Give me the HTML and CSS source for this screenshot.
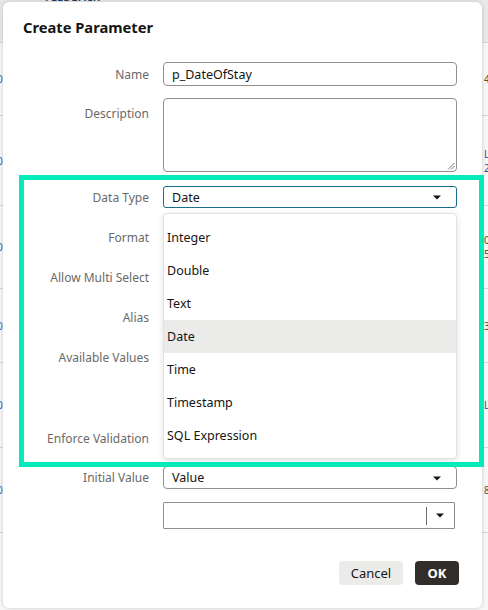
FILE: index.html
```html
<!DOCTYPE html>
<html>
<head>
<meta charset="utf-8">
<link rel="stylesheet" href="styles.css">
</head>
<body>
<div class="backdrop">
  <div class="bg-head"><span class="bg-head-text">FEEDBACK</span></div>
  <div class="bg-row h73"><span class="bg-l">0</span><span class="bg-r"><span>4</span></span></div>
  <div class="bg-row h90"><span class="bg-l">0</span><span class="bg-r blue"><span>L</span><span>2</span></span></div>
  <div class="bg-row h83"><span class="bg-l">0</span><span class="bg-r"><span>0</span><span>5</span></span></div>
  <div class="bg-row h74"><span class="bg-l">0</span><span class="bg-r"><span>3</span></span></div>
  <div class="bg-row h85"><span class="bg-l">0</span><span class="bg-r blue"><span>L</span></span></div>
  <div class="bg-row h85"><span class="bg-l">0</span><span class="bg-r"><span>8</span></span></div>
  <div class="bg-row h80"></div>
</div>

<div class="dialog">
  <h1 class="title">Create Parameter</h1>
  <div class="form">
    <div class="row r-name">
      <span class="lbl">Name</span>
      <div class="field">p_DateOfStay</div>
    </div>
    <div class="row r-desc">
      <span class="lbl lbl-top">Description</span>
      <div class="field area">
        <svg class="grip" width="8" height="8" viewBox="0 0 8 8"><path d="M1 7.5L7.5 1M4 7.5L7.5 4" stroke="#7a7a7a" stroke-width="1" fill="none"/></svg>
      </div>
    </div>
    <div class="row r-std">
      <span class="lbl">Data Type</span>
      <div class="field select focus">Date
        <svg class="caret" width="8" height="5" viewBox="0 0 8 5"><path d="M0 0.5h8L4 4.5z" fill="#161513"/></svg>
      </div>
    </div>
    <div class="row r-gap"><span class="lbl">Format</span><div></div></div>
    <div class="row r-gap"><span class="lbl">Allow Multi Select</span><div></div></div>
    <div class="row r-gap"><span class="lbl">Alias</span><div></div></div>
    <div class="row r-gap r-avail"><span class="lbl lbl-top2">Available Values</span><div></div></div>
    <div class="row r-gap"><span class="lbl">Enforce Validation</span><div></div></div>
    <div class="row r-init">
      <span class="lbl">Initial Value</span>
      <div class="field select">Value
        <svg class="caret" width="8" height="5" viewBox="0 0 8 5"><path d="M0 0.5h8L4 4.5z" fill="#161513"/></svg>
      </div>
    </div>
    <div class="row r-combo">
      <span></span>
      <div class="combo">
        <div class="combo-input"></div>
        <div class="combo-btn">
          <svg width="8" height="5" viewBox="0 0 8 5"><path d="M0 0.5h8L4 4.5z" fill="#161513"/></svg>
        </div>
      </div>
    </div>
  </div>
  <div class="footer">
    <button class="btn cancel">Cancel</button>
    <button class="btn ok">OK</button>
  </div>

  <ul class="listbox">
    <li class="opt">Integer</li>
    <li class="opt">Double</li>
    <li class="opt">Text</li>
    <li class="opt hover">Date</li>
    <li class="opt">Time</li>
    <li class="opt">Timestamp</li>
    <li class="opt">SQL Expression</li>
  </ul>
</div>

<div class="highlight"></div>
</body>
</html>
```
FILE: styles.css
```css
* { box-sizing: border-box; }
html, body { margin: 0; padding: 0; }
body {
  width: 488px;
  height: 610px;
  overflow: hidden;
  position: relative;
  font-family: "Noto Sans", "Open Sans", sans-serif;
  background: #f4f4f4;
}

/* background app */
.backdrop { display: flex; flex-direction: column; width: 488px; }
.bg-head {
  height: 43px;
  background: #e9e9e9;
  border-bottom: 1px solid #d8d8d8;
  overflow: hidden;
}
.bg-head-text {
  display: block;
  margin: -9px 0 0 45px;
  font-size: 11px;
  line-height: 12px;
  color: #1f3a5a;
  font-weight: 600;
}
.bg-row {
  display: flex;
  justify-content: space-between;
  align-items: center;
  border-bottom: 1px solid #d6d6d6;
  background: #f7f7f7;
  font-size: 10px;
  line-height: 12px;
  overflow: hidden;
}
.h73 { height: 73px; }
.h90 { height: 90px; }
.h83 { height: 83px; }
.h74 { height: 74px; }
.h85 { height: 85px; }
.h80 { height: 80px; }
.bg-l { margin-left: -3px; color: #1a6ac8; }
.bg-r {
  margin-right: -2px;
  width: 6px;
  color: #6b4a1e;
  display: flex;
  flex-direction: column;
  gap: 2px;
}
.bg-r.blue { color: #1f4f8f; }

/* dialog */
.dialog {
  position: absolute;
  left: 3px;
  top: 2px;
  width: 479px;
  height: 606px;
  background: #fff;
  border-radius: 6px;
  box-shadow: 0 0 4px rgba(0,0,0,0.18);
  display: flex;
  flex-direction: column;
}
.title {
  margin: 0;
  padding: 15px 0 0 20px;
  font-size: 14.7px;
  line-height: 20px;
  font-weight: 700;
  color: #161513;
}
.form {
  margin-top: 25px;
  display: flex;
  flex-direction: column;
}
.row {
  display: grid;
  grid-template-columns: 146px 294px;
  column-gap: 14px;
  align-items: center;
}
.lbl {
  text-align: right;
  font-size: 12px;
  line-height: 16px;
  padding-top: 1px;
  color: #6a6a6a;
  white-space: nowrap;
}
.lbl-top { align-self: start; padding-top: 8px; }
.lbl-top2 { align-self: start; padding-top: 4px; }

.r-name { height: 24px; }
.r-desc { height: 74px; margin-top: 12px; align-items: stretch; }
.r-std { height: 22px; margin-top: 14px; }
.r-gap { height: 22px; margin-top: 18px; }
.r-avail { height: 63px; }
.r-init { height: 23px; margin-top: 17px; }
.r-combo { height: 27px; margin-top: 13px; }

.field {
  position: relative;
  height: 100%;
  border: 1px solid #8f8f8f;
  border-radius: 4px;
  padding: 0 8px;
  display: flex;
  align-items: center;
  font-size: 12.5px;
  color: #161513;
}
.area { border-radius: 4px; }
.grip { position: absolute; right: 1px; bottom: 1px; }
.select.focus { border-color: #1a6f8e; border-radius: 3px; }
.caret { position: absolute; right: 15px; top: 50%; margin-top: -2px; }

.combo {
  height: 27px;
  width: 292px;
  border: 1px solid #8f8f8f;
  border-radius: 1px;
  display: flex;
  align-items: center;
}
.combo-input { flex: 1; height: 100%; }
.combo-btn {
  width: 28px;
  height: 18px;
  border-left: 1px solid #6f6f6f;
  display: flex;
  align-items: center;
  justify-content: center;
  padding-right: 2px;
}
.combo-btn svg { display: block; }

.footer {
  margin-top: 32px;
  display: flex;
  justify-content: flex-end;
  gap: 12px;
  padding-right: 23px;
}
.btn {
  height: 24px;
  border: none;
  border-radius: 4px;
  font-family: "Noto Sans", "Open Sans", sans-serif;
  font-size: 13px;
  padding: 0;
  cursor: pointer;
}
.cancel { width: 64px; background: #ebebea; color: #161513; }
.ok { width: 44px; background: #312d2a; color: #fff; font-weight: 700; }

/* open listbox */
.listbox {
  position: absolute;
  left: 160px;
  top: 211px;
  width: 294px;
  height: 246px;
  margin: 0;
  padding: 7px 0 6px;
  list-style: none;
  background: #fff;
  border: 1px solid #e2e2e2;
  border-radius: 4px;
  box-shadow: 0 2px 6px rgba(0,0,0,0.12);
}
.opt {
  height: 33px;
  line-height: 33px;
  padding-left: 3px;
  font-size: 12.5px;
  color: #161513;
}
.opt.hover { background: #ebebea; }

/* annotation highlight */
.highlight {
  position: absolute;
  left: 19px;
  top: 175px;
  width: 465px;
  height: 292px;
  border: 5px solid #04ebbb;
  pointer-events: none;
}
```
